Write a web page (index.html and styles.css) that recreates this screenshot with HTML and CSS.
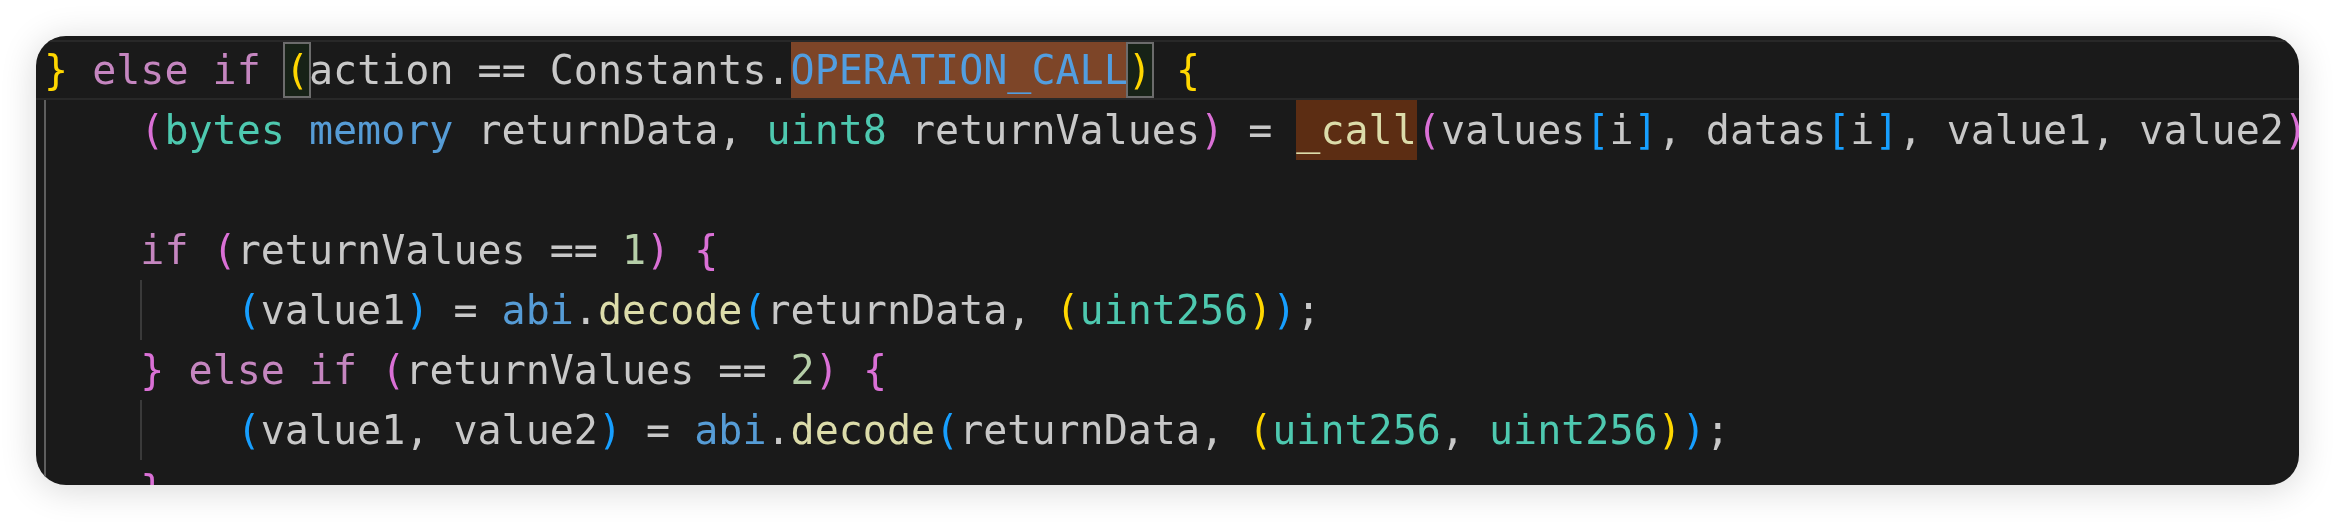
FILE: index.html
```html
<!DOCTYPE html>
<html lang="en">
<head>
<meta charset="utf-8">
<title>Code snippet</title>
<link rel="stylesheet" href="styles.css">
</head>
<body>
<div class="card">
  <div class="code">
    <div class="line current"><span class="b1">}</span> <span class="kw">else</span> <span class="kw">if</span> <span class="match b1">(</span>action == Constants.<span class="find const">OPERATION_CALL</span><span class="match b1">)</span> <span class="b1">{</span></div>
    <div class="line"><span class="ind ga">    </span><span class="b2">(</span><span class="type">bytes</span> <span class="mem">memory</span> returnData, <span class="type">uint8</span> returnValues<span class="b2">)</span> = <span class="word fn">_call</span><span class="b2">(</span>values<span class="b3">[</span>i<span class="b3">]</span>, datas<span class="b3">[</span>i<span class="b3">]</span>, value1, value2<span class="b2">)</span></div>
    <div class="line"><span class="ind ga">    </span></div>
    <div class="line"><span class="ind ga">    </span><span class="kw">if</span> <span class="b2">(</span>returnValues == <span class="num">1</span><span class="b2">)</span> <span class="b2">{</span></div>
    <div class="line"><span class="ind ga">    </span><span class="ind gi">    </span><span class="b3">(</span>value1<span class="b3">)</span> = <span class="mem">abi</span>.<span class="fn">decode</span><span class="b3">(</span>returnData, <span class="b1">(</span><span class="type">uint256</span><span class="b1">)</span><span class="b3">)</span>;</div>
    <div class="line"><span class="ind ga">    </span><span class="b2">}</span> <span class="kw">else</span> <span class="kw">if</span> <span class="b2">(</span>returnValues == <span class="num">2</span><span class="b2">)</span> <span class="b2">{</span></div>
    <div class="line"><span class="ind ga">    </span><span class="ind gi">    </span><span class="b3">(</span>value1, value2<span class="b3">)</span> = <span class="mem">abi</span>.<span class="fn">decode</span><span class="b3">(</span>returnData, <span class="b1">(</span><span class="type">uint256</span>, <span class="type">uint256</span><span class="b1">)</span><span class="b3">)</span>;</div>
    <div class="line"><span class="ind ga">    </span><span class="b2">}</span></div>
  </div>
</div>
</body>
</html>
```

FILE: styles.css
```css
html, body {
  margin: 0;
  padding: 0;
  background: #ffffff;
}

body {
  width: 2336px;
  height: 522px;
  overflow: hidden;
}

.card {
  margin: 36px 0 0 36px;
  width: 2263px;
  height: 449px;
  border-radius: 30px;
  overflow: hidden;
  background: #1a1a1a;
  box-shadow: 0 4px 36px rgba(0, 0, 0, 0.16);
  padding: 4px 0 0 0;
  box-sizing: border-box;
}

.code {
  font-family: "DejaVu Sans Mono", "Liberation Mono", monospace;
  font-size: 40px;
  color: #c8c8c8;
  filter: blur(0.45px);
}

.line {
  white-space: pre;
  height: 60px;
  line-height: 60px;
  padding-left: 8px;
}

.current {
  box-shadow: inset 0 2px 0 #282828, inset 0 -2px 0 #282828;
}

.ind {
  display: inline-block;
  vertical-align: top;
  height: 60px;
}

.ga {
  box-shadow: inset 2px 0 0 #5e5e5e;
}

.gi {
  box-shadow: inset 2px 0 0 #3a3a3a;
}

.kw { color: #c586c0; }
.type { color: #4ec9b0; }
.mem { color: #569cd6; }
.const { color: #529ee0; }
.fn { color: #dcdcaa; }
.num { color: #b5cea8; }
.b1 { color: #ffd700; }
.b2 { color: #da70d6; }
.b3 { color: #179fff; }

.find {
  display: inline-block;
  vertical-align: top;
  height: 56px;
  line-height: 56px;
  margin-top: 2px;
  background: #7d4528;
}

.word {
  display: inline-block;
  vertical-align: top;
  height: 60px;
  background: #5c2d13;
}

.match {
  display: inline-block;
  vertical-align: top;
  height: 56px;
  line-height: 52px;
  margin-top: 2px;
  box-sizing: border-box;
  border: 2px solid #6c6c6c;
  margin-left: -2px;
  margin-right: -2px;
  background: #172217;
}
```
